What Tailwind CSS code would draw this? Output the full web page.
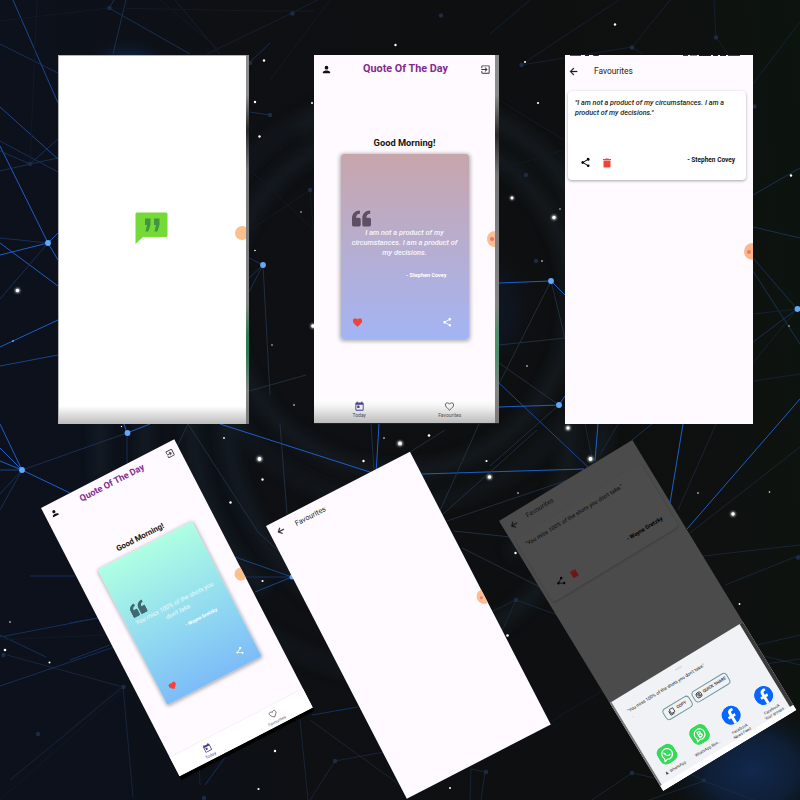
<!DOCTYPE html>
<html lang="en">
<head>
<meta charset="utf-8">
<title>Quote Of The Day</title>
<script src="https://cdn.jsdelivr.net/npm/@tailwindcss/browser@4"></script>
</head>
<body class="bg-[#0d0f12]">
<svg class="absolute" width="0" height="0" aria-hidden="true">
  <defs>
    <symbol id="person" viewBox="0 0 24 24"><path fill="currentColor" d="M12 12a4 4 0 1 0 0-8 4 4 0 0 0 0 8zm0 2c-2.700 0-8 1.300-8 4v2h16v-2c0-2.700-5.300-4-8-4z"/></symbol>
    <symbol id="exit" viewBox="0 0 24 24"><path fill="currentColor" d="M10.100 15.600 11.500 17l5-5-5-5-1.400 1.400 2.600 2.600H3v2h9.700zM19 3H5a2 2 0 0 0-2 2v4h2V5h14v14H5v-4H3v4c0 1.100.9 2 2 2h14a2 2 0 0 0 2-2V5a2 2 0 0 0-2-2z"/></symbol>
    <symbol id="back" viewBox="0 0 24 24"><path fill="currentColor" stroke="currentColor" stroke-width=".6" d="M20 11H7.800l5.600-5.600L12 4l-8 8 8 8 1.400-1.400L7.800 13H20z"/></symbol>
    <symbol id="share" viewBox="0 0 24 24"><path fill="currentColor" d="M18 16.100c-.8 0-1.400.3-2 .8l-7.100-4.200a3.300 3.300 0 0 0 0-1.400L16 7.200A3 3 0 1 0 15 5c0 .2 0 .5.100.7L8 9.800a3 3 0 1 0 0 4.400l7.100 4.200-.1.600a2.900 2.900 0 1 0 3-2.900z"/></symbol>
    <symbol id="heart" viewBox="0 0 24 24"><path fill="currentColor" d="m12 21.400-1.500-1.400C5.400 15.400 2 12.300 2 8.500A5.400 5.400 0 0 1 7.500 3c1.700 0 3.400.8 4.500 2.100A6 6 0 0 1 16.500 3 5.400 5.400 0 0 1 22 8.500c0 3.800-3.400 6.900-8.500 11.500z"/></symbol>
    <symbol id="heart-o" viewBox="0 0 24 24"><path fill="none" stroke="currentColor" stroke-width="2" d="M12 20C6.500 15 3 12 3 8.500A4.500 4.500 0 0 1 7.500 4C9.500 4 11 5 12 7c1-2 2.500-3 4.500-3A4.500 4.500 0 0 1 21 8.500C21 12 17.500 15 12 20z"/></symbol>
    <symbol id="today" viewBox="0 0 24 24"><path fill="currentColor" fill-rule="evenodd" d="M19 3h-1V1h-2v2H8V1H6v2H5a2 2 0 0 0-2 2v14c0 1.100.9 2 2 2h14a2 2 0 0 0 2-2V5a2 2 0 0 0-2-2zm0 16H5V8h14zM7 10h5v5H7z"/></symbol>
    <symbol id="trash" viewBox="0 0 24 24"><path fill="currentColor" d="M5 19c0 1.100.9 2 2 2h10a2 2 0 0 0 2-2V7H5zM20 4h-4.500l-1-1h-5l-1 1H4v2h16z"/></symbol>
    <symbol id="quote" viewBox="0 0 24 20"><path fill="currentColor" d="M10 0v4C7 4 5.200 6 5.200 9H9a2 2 0 0 1 2 2v7a2 2 0 0 1-2 2H2a2 2 0 0 1-2-2v-8C0 4 4 0 10 0zM23 0v4c-3 0-4.800 2-4.800 5H22a2 2 0 0 1 2 2v7a2 2 0 0 1-2 2h-7a2 2 0 0 1-2-2v-8c0-6 4-10 10-10z"/></symbol>
    <symbol id="facebook" viewBox="0 0 24 24"><circle cx="12" cy="12" r="12" fill="#0866ff"/><path fill="#fff" d="M10 24v-8.500H7V12h3V9.700C10 6.300 11.800 4.500 15 4.500c1 0 1.800.1 2.400.2v3.100h-1.700c-1.500 0-2 .8-2 2V12h3.500l-.6 3.500h-2.900V24z"/></symbol>
    <symbol id="whatsapp" viewBox="0 0 24 24"><rect width="24" height="24" rx="9" fill="#37d95a"/><path fill="none" stroke="#fff" stroke-width="1.500" d="m5.200 18.800 1-3.700a6.800 6.800 0 1 1 2.700 2.700z"/><path fill="#fff" d="M9.400 8c-.8.300-1.200 1.300-.8 2.400.8 2.300 2.600 4 4.900 4.800 1.200.4 2.200-.2 2.400-1.200l-1.800-1.100-1 .9a5.500 5.500 0 0 1-2.700-2.600l.8-1z"/></symbol>
    <symbol id="wa-business" viewBox="0 0 24 24"><rect width="24" height="24" rx="9" fill="#37d95a"/><path fill="none" stroke="#fff" stroke-width="1.500" d="m5.200 18.800 1-3.700a6.800 6.800 0 1 1 2.700 2.700z"/><path fill="none" stroke="#fff" stroke-width="1.600" d="M10.300 8.500h2.200a1.600 1.600 0 0 1 0 3.300h-2.200zm0 3.300h2.500a1.800 1.800 0 0 1 0 3.600h-2.500z"/></symbol>
  </defs>
</svg>

<main class="relative w-[800px] h-[800px] overflow-hidden">
  <svg class="absolute inset-0" width="800" height="800" viewBox="0 0 800 800" aria-hidden="true">
    <defs>
      <linearGradient id="sky" x1="0" x2="1" y1="0.1" y2="0"><stop offset="0" stop-color="#0c111c"/><stop offset=".28" stop-color="#0e1014"/><stop offset=".55" stop-color="#0e0f10"/><stop offset=".85" stop-color="#0e1110"/><stop offset="1" stop-color="#0c140f"/></linearGradient>
      <radialGradient id="blue"><stop offset="0" stop-color="#11284e"/><stop offset=".55" stop-color="#0f2342" stop-opacity=".75"/><stop offset="1" stop-color="#0c1626" stop-opacity="0"/></radialGradient>
      <filter id="soft" x="-20%" y="-20%" width="140%" height="140%"><feGaussianBlur stdDeviation="7"/></filter>
      <filter id="glow" x="-1" y="-1" width="3" height="3"><feGaussianBlur stdDeviation="1.200"/></filter>
    </defs>
    <rect width="800" height="800" fill="url(#sky)"/>
    <ellipse cx="128" cy="75" rx="48" ry="38" fill="url(#blue)"/>
    <ellipse cx="752" cy="770" rx="82" ry="64" fill="url(#blue)"/>
    <ellipse cx="490" cy="310" rx="45" ry="60" fill="url(#blue)" opacity=".35"/>
    <g fill="none" stroke="#1c2a35" stroke-width="12" opacity=".5" filter="url(#soft)">
      <circle cx="400" cy="300" r="172"/><circle cx="400" cy="300" r="205" opacity=".7"/>
      <path d="M190 420c5 70 30 130 75 170M225 420c5 80 50 150 110 190M145 420v60M100 420v60M440 650c60-20 120-60 150-150M570 424c5 40-15 90-60 130M605 424c-5 50-30 90-70 130M300 130c60-40 140-40 210 0s90 110 70 210"/>
      <path d="M250 620c60 50 140 70 230 40" opacity=".7"/>
    </g>
    <g fill="none" stroke="#174a9c" stroke-width="1">
      <path stroke="#1b479a" d="M13 0 58 103M0 107l58 52M499 383l91 86"/>
      <path stroke="#1d5fc8" d="M0 146l48 97L0 255M0 243l58 43M58 233l-10 10 10 17M0 347l58-27M0 424l22 46L0 448M0 461l22 9M22 470l48 23M127 433l-3-9M127 433l23-9M220 424l156 50 3-50M422 474l162-5M595 461l3-37M683 424l-13 79M687 529l113-130M499 407l60-2 6-9M499 283l52-2 14 14"/>
      <path stroke="#184585" d="M0 366l58-11M0 470h22M235 557l57 20-37 15"/>
      <path stroke="#162f5c" d="M30 576h45M0 635l46 22M70 660l40-15M0 686l123-42M70 623l28-5M0 637l98-19M245 577h47M312 715l46-8M205 785l45-62M632 440l20-16"/>
      <g opacity=".75">
      <path stroke="#1c3a68" d="M109 8l81 46M126 0l-13 54M109 8l5-8M0 44l58 29M0 141l58 31M30 164l28-25M30 164l28-6M0 171l30-7-30-13M48 243l-48-5M48 243 0 299M22 470l105-37v30M22 470 0 510M22 470 0 494M249 63l21-20M250 112l20 3M249 258l14 7-14 13M263 265l-14 27M753 195l47-27M753 227l47 11M753 271l47 73M753 258l44 51M797 309l-44 33"/>
      <path stroke="#16263d" d="M175 0l45 54M292 13l-85 41M292 13l25-13M490 34l40-34M521 65l98-65M521 65l111-18 38-47M716 37l-2-37M716 37l12 17M753 84l47-62M632 47l10 7M797 309l-44 5M797 309l-44 54M753 381l47-7"/>
      <path stroke="#26384d" d="M551 281 499 384M551 281l14 57-66 7M499 363l60 42-69 61M263 265l7 130M249 391l57-16M280 424l7 90M188 424l-26 54M188 424l70 108 38 35M371 424l3 46M410 452l35-22M438 515l41-91M442 515l95-85M447 521l153-52M454 531l85 9M462 548l100 50"/>
      </g>
      <g opacity=".65"><path stroke="#1d304b" d="M493 611l23-11-18 40M516 600l50 18M7 655l116 32 10 110M123 687 10 780M200 785l-2-60M300 720l8 80M335 761l-25 39M335 761l49-9M310 720l90 65M471 769l14 3-4 28M471 769l-1 31M632 773l-40 27M632 773l32 7M704 781l-55 19M704 781l50 19M704 781l-42-22M740 649l60-14M760 655l40 10M765 664l35-5M716 424l-38 86M585 424l7 33M618 424l-18 31M690 533l110-86M703 556l97-11M725 585l75-30"/></g>
      <path stroke="#131a25" d="M0 21l109-13 155 3h50M30 164l7-164M270 80l60-80M220 50l-60-50M250 170l64 60M310 190l4 50M250 230l60-40M499 100l65 40M499 170l65-20M0 640l123-6M70 730l50-43M0 800l123-110M520 740l100-60"/>
    </g>
    <g fill="#62a8fa"><circle cx="48" cy="243" r="2.900"/><circle cx="263" cy="265" r="2.900"/><circle cx="551" cy="281" r="2.900"/><circle cx="559" cy="405" r="2.900"/><circle cx="22" cy="470" r="2.900"/><circle cx="127.500" cy="433" r="2.900"/><circle cx="797.500" cy="309" r="2.900"/><circle cx="292" cy="577" r="2.500"/></g>
    <g fill="#1d2c46"><circle cx="109.500" cy="8" r="2.200"/><circle cx="30" cy="164" r="2.200"/><circle cx="292.500" cy="13.500" r="2.200"/><circle cx="250" cy="63" r="2.200"/><circle cx="270" cy="115" r="2.200"/><circle cx="310" cy="190" r="2.200"/><circle cx="441" cy="15.500" r="2.200"/><circle cx="521.500" cy="65" r="2.200"/><circle cx="536" cy="261" r="2.200"/><circle cx="526" cy="175" r="2.200"/><circle cx="632" cy="47.500" r="2.200"/><circle cx="716" cy="37.500" r="2.200"/><circle cx="754.500" cy="106.500" r="2.200"/><circle cx="798" cy="557.500" r="2.200"/><circle cx="123.500" cy="687" r="2.200"/><circle cx="3.500" cy="655" r="2.200"/><circle cx="38" cy="734" r="2.200"/><circle cx="335" cy="761" r="2.200"/><circle cx="486" cy="772" r="2.200"/><circle cx="516" cy="600" r="2.200"/><circle cx="632" cy="773" r="2.200"/><circle cx="704" cy="780.500" r="2.200"/><circle cx="204" cy="798" r="2.200"/></g>
    <g fill="#fff" opacity=".7" filter="url(#glow)"><circle cx="17.500" cy="290.500" r="2.500"/><circle cx="259.500" cy="459" r="2.800"/><circle cx="400" cy="443.500" r="2.800"/><circle cx="489.500" cy="477" r="2.600"/><circle cx="590.500" cy="459" r="2.800"/><circle cx="554" cy="217.500" r="2.500"/><circle cx="568" cy="428" r="2.500"/><circle cx="733" cy="514" r="2.500"/><circle cx="313" cy="326" r="2.500"/><circle cx="512" cy="198" r="2"/></g>
    <g fill="#fff"><circle cx="17.500" cy="290.500" r="1.800"/><circle cx="259.500" cy="459" r="1.900"/><circle cx="400" cy="443.500" r="1.900"/><circle cx="489.500" cy="477" r="1.800"/><circle cx="590.500" cy="459" r="1.900"/><circle cx="554" cy="217.500" r="1.700"/><circle cx="568" cy="428" r="1.700"/><circle cx="733" cy="514" r="1.700"/><circle cx="313" cy="326" r="1.800"/><circle cx="512" cy="198" r="1.400"/>
      <circle cx="264" cy="60.500" r="1.200"/><circle cx="255" cy="102" r="1.200"/><circle cx="259.500" cy="136.500" r="1.200"/><circle cx="255" cy="250.500" r=".8"/><circle cx="312" cy="103" r="1"/><circle cx="395.500" cy="45" r="1.200"/><circle cx="525" cy="62" r="1"/><circle cx="538" cy="103" r="1.100"/><circle cx="615" cy="24.500" r="1.200"/><circle cx="791" cy="175.500" r="1.200"/><circle cx="560" cy="209" r=".7"/><circle cx="542" cy="261" r=".8"/><circle cx="301" cy="212" r=".7"/><circle cx="272" cy="345" r=".7"/><circle cx="294" cy="405" r=".8"/><circle cx="527" cy="366" r=".8"/><circle cx="13" cy="341" r=".7"/><circle cx="121.500" cy="426.500" r=".7"/><circle cx="224" cy="438" r=".9"/><circle cx="262.500" cy="479.500" r="1.200"/><circle cx="230.500" cy="502.500" r="1.200"/><circle cx="262.500" cy="581" r="1.100"/><circle cx="363.500" cy="461" r="1.200"/><circle cx="429" cy="435.500" r="1.300"/><circle cx="384" cy="438" r=".8"/><circle cx="486.500" cy="461" r="1.100"/><circle cx="518" cy="493" r=".8"/><circle cx="515.500" cy="553" r="1.200"/><circle cx="507.500" cy="635.500" r="1.300"/><circle cx="5" cy="650" r="1.300"/><circle cx="10" cy="622" r=".8"/><circle cx="49.500" cy="662.500" r="1"/><circle cx="275" cy="751" r="1.200"/><circle cx="258.500" cy="789" r="1.100"/><circle cx="450" cy="788" r="1"/><circle cx="769.500" cy="492" r=".8"/><circle cx="698" cy="493" r=".8"/><circle cx="739.500" cy="604" r=".9"/><circle cx="789" cy="326" r=".7"/></g>
  </svg>

  <!-- Splash screen -->
  <section class="absolute left-[58px] top-[54.500px] w-[191px] h-[369.500px] flex bg-white overflow-hidden">
    <div class="relative flex-1 flex justify-center overflow-hidden pt-[156.500px] border-t border-l border-[#b5b5b5] bg-[linear-gradient(to_bottom,#ffffff_350px,#b8b8b8_369px)]">
      <svg class="-ml-px w-[33px] h-[33px]" viewBox="0 0 33 33"><path fill="#75d936" d="M2 .5h29a1.500 1.500 0 0 1 1.500 1.500v21.500a1.500 1.500 0 0 1-1.500 1.500H8L.5 32V2A1.500 1.500 0 0 1 2 .5z"/><path fill="#42943f" d="M10 6.500h5.500v6.500l-2.300 6.500h-2.700l1.500-6.500h-2zm9 0h5.500v6.500l-2.300 6.500h-2.700l1.500-6.500h-2z"/></svg>
      <span class="absolute right-[-3px] top-[170.500px] size-[14px] rounded-full bg-[#fcc08e]"></span>
    </div>
    <div class="relative w-[3.500px] bg-[linear-gradient(to_bottom,#8b8b8b_0,#8b8b8b_40px,#2a2a2a_75px,#777_115px,#858585_250px,#2f7a50_280px,#2f7a50_300px,#858585_335px,#777_369px)]"></div>
  </section>

  <!-- Quote of the day, upright -->
  <section class="absolute left-[314px] top-[54.500px] w-[185px] h-[369px] flex overflow-hidden border-b border-[#222]">
    <div class="relative flex-1 overflow-hidden bg-[#fefaff] flex flex-col font-[Roboto,sans-serif]">
      <header class="h-[29px] pl-[6.500px] pr-[4.500px] flex items-center justify-between text-[#111]">
        <svg class="size-[11px]"><use href="#person"/></svg>
        <h1 class="text-[10.800px] leading-none font-bold text-[#832a91] whitespace-nowrap">Quote Of The Day</h1>
        <svg class="size-[11px] text-[#333]"><use href="#exit"/></svg>
      </header>
      <h2 class="mt-[52.500px] h-[13px] leading-[13px] text-center text-[9.300px] font-bold text-[#151515]">Good Morning!</h2>
      <article class="mt-[4.500px] mx-auto w-[128px] h-[185px] shrink-0 rounded-[3px] shadow-[0_1px_4px_1px_rgba(0,0,0,0.35)] bg-linear-to-b from-[#c8a5ab] to-[#a3b4f4] flex flex-col text-white">
        <svg class="mt-[56px] ml-[11.500px] w-[19px] h-[17px] text-[#5e4f63]"><use href="#quote"/></svg>
        <p class="mt-[1px] text-center italic text-[7.400px] leading-[10px] font-medium whitespace-nowrap text-white/90">I am not a product of my<br>circumstances. I am a product of<br>my decisions.</p>
        <p class="mt-[12px] pr-[22px] text-right text-[5.500px] leading-[10px] font-bold">- Stephen Covey</p>
        <div class="mt-[37px] px-[11.500px] flex justify-between items-center">
          <svg class="size-[11px] text-[#f44336]"><use href="#heart"/></svg>
          <svg class="size-[10.500px] mr-[5px]"><use href="#share"/></svg>
        </div>
      </article>
      <nav class="mt-auto h-[24px] flex text-center text-[5px] leading-[6px] bg-[linear-gradient(to_bottom,#ffffff_0,#f4f4f4_7px,#bcbcbc_100%)]">
        <div class="flex-1 pt-[2.500px] flex flex-col items-center text-[#4a3f8c]"><svg class="size-[11px]"><use href="#today"/></svg><span class="text-[#4c4a5c]">Today</span></div>
        <div class="flex-1 pt-[2.500px] flex flex-col items-center text-[#555]"><svg class="size-[11px]"><use href="#heart-o"/></svg><span>Favourites</span></div>
      </nav>
      <span class="absolute right-[-8px] top-[176.500px] size-[16px] rounded-full bg-[#fbbd91] flex items-center pl-[3px]"><i class="size-[4px] rounded-full bg-[#ee7065]"></i></span>
    </div>
    <div class="w-[4px] bg-[linear-gradient(to_bottom,#8b8b8b_0,#8b8b8b_40px,#2a2a2a_80px,#777_120px,#858585_250px,#4d8e6c_280px,#4d8e6c_300px,#858585_335px,#777_369px)]"></div>
  </section>

  <!-- Favourites, upright -->
  <section class="absolute left-[565px] top-[54.500px] w-[188px] h-[369px] bg-[#fefaff] overflow-hidden font-[Roboto,sans-serif]">
    <div class="h-[2px] flex justify-between pl-[5px] pr-[13px]"><span class="flex gap-[4px]"><i class="w-[11px] h-px bg-[#555]"></i><i class="w-[4px] h-px bg-[#222]"></i><i class="w-[6px] h-[1.500px] rounded-b bg-[#333]"></i></span><span class="flex gap-[2px]"><i class="w-[5px] h-px bg-[#444]"></i><i class="w-[7px] h-px bg-[#987]"></i><i class="w-[12px] h-px bg-[#222]"></i><i class="w-[5px] h-[1.500px] bg-[#222]"></i><i class="w-[6px] h-[1.500px] bg-[#222]"></i><i class="w-[12px] h-px bg-[#444]"></i></span></div>
    <header class="h-[30px] pl-[3px] flex items-center text-[#1d1b20]">
      <svg class="size-[11px]"><use href="#back"/></svg><h1 class="ml-[15px] text-[8.400px] leading-none">Favourites</h1>
    </header>
    <article class="mt-[4.500px] ml-[3px] w-[178px] h-[89px] rounded-[4px] bg-white shadow-[0_1px_3px_rgba(0,0,0,0.35)] pt-[6.500px] pl-[7px] flex flex-col">
      <p class="text-[7.200px] leading-[10px] italic font-medium text-[#222] whitespace-nowrap">"I am not a product of my circumstances. I am a<br>product of my decisions."</p>
      <div class="mt-[39px] pl-[5px] pr-[11px] flex items-center">
        <svg class="size-[11px] text-black"><use href="#share"/></svg>
        <svg class="size-[12px] ml-[10px] text-[#f04438]"><use href="#trash"/></svg>
        <span class="ml-auto -mt-[5px] text-[6.500px] leading-[10px] font-bold text-[#111]">- Stephen Covey</span>
      </div>
    </article>
    <span class="absolute right-[-8px] top-[188.500px] size-[17px] rounded-full bg-[#fbb68c] flex items-center pl-[3px]"><i class="size-[4px] rounded-full bg-[#ee7860]"></i></span>
  </section>

  <!-- Quote of the day, tilted -->
  <section class="absolute left-[41px] top-[508px] w-[149.500px] h-[306px] origin-top-left -rotate-[27.300deg] bg-black">
    <div class="relative h-[301.500px] bg-[#fefaff] overflow-hidden flex flex-col font-[Roboto,sans-serif]">
      <header class="h-[21px] px-[5px] flex items-center justify-between text-[#111]">
        <svg class="size-[9.500px]"><use href="#person"/></svg>
        <h1 class="text-[9.100px] leading-none font-bold text-[#832a91] whitespace-nowrap">Quote Of The Day</h1>
        <svg class="size-[9.500px] text-[#333]"><use href="#exit"/></svg>
      </header>
      <h2 class="mt-[44.500px] h-[11px] leading-[11px] text-center text-[7.900px] font-bold text-[#151515]">Good Morning!</h2>
      <article class="mt-[4.500px] ml-[22px] w-[106px] h-[151.500px] rounded-[2px] shadow-[0_1px_4px_1px_rgba(0,0,0,0.3)] bg-linear-to-b from-[#aeffe2] to-[#7dbcf8] flex flex-col text-white">
        <svg class="mt-[46px] ml-[10px] w-[16px] h-[14px] text-[#42686f]"><use href="#quote"/></svg>
        <p class="mt-[1px] text-center italic text-[6.300px] leading-[8.500px] whitespace-nowrap text-white/80">You miss 100% of the shots you<br>don't take.</p>
        <p class="mt-[7.500px] pr-[18px] text-right text-[4.800px] leading-[8px] font-bold">- Wayne Gretzky</p>
        <div class="mt-[39.500px] pl-[9px] pr-[13px] flex justify-between items-center">
          <svg class="size-[9px] text-[#f44336]"><use href="#heart"/></svg>
          <svg class="size-[9px]"><use href="#share"/></svg>
        </div>
      </article>
      <nav class="mt-auto h-[22px] flex text-center text-[4.300px] leading-[5px] bg-white border-t border-[#f5f1f5]">
        <div class="flex-1 pt-[4px] flex flex-col items-center text-[#4a3f8c]"><svg class="size-[9.500px]"><use href="#today"/></svg><span class="mt-px">Today</span></div>
        <div class="flex-1 pt-[4px] flex flex-col items-center text-[#666]"><svg class="size-[9.500px]"><use href="#heart-o"/></svg><span class="mt-px">Favourites</span></div>
      </nav>
      <span class="absolute right-[-4px] top-[144px] size-[13px] rounded-full bg-[#fcc08e]"></span>
    </div>
  </section>

  <!-- Empty favourites, tilted -->
  <section class="absolute left-[266px] top-[526px] w-[162px] h-[307px] origin-top-left -rotate-[27.300deg] bg-[#fefaff] overflow-hidden font-[Roboto,sans-serif]">
    <header class="h-[22.500px] pl-[5.500px] flex items-center text-[#1d1b20]">
      <svg class="size-[10px]"><use href="#back"/></svg><h1 class="ml-[11.500px] text-[7.300px] leading-none">Favourites</h1>
    </header>
    <span class="absolute right-[-7px] top-[154.500px] size-[15px] rounded-full bg-[#fbbd91] flex items-center pl-[3px]"><i class="size-[3px] rounded-full bg-[#ee8070]"></i></span>
  </section>

  <!-- Share sheet over favourites, tilted -->
  <section class="absolute left-[499px] top-[521px] w-[155.500px] h-[316px] origin-top-left -rotate-[31.300deg] bg-[#4b4b4b] overflow-hidden flex flex-col font-[Roboto,sans-serif]">
    <header class="h-[21px] pl-[5.500px] flex items-center text-[#151515]">
      <svg class="size-[10px]"><use href="#back"/></svg><h1 class="ml-[10.500px] text-[6.800px] leading-none">Favourites</h1>
    </header>
    <article class="mt-[3px] ml-[4px] w-[147px] h-[74px] rounded-[4px] bg-[#4c4c4c] shadow-[0_1px_2px_rgba(0,0,0,0.18)] pt-[6px] pl-[7px] flex flex-col text-[#161616]">
      <p class="text-[5.900px] leading-[9px] italic font-medium whitespace-nowrap">"You miss 100% of the shots you don't take."</p>
      <div class="mt-[39.500px] pl-[5px] pr-[10px] flex items-center text-black">
        <svg class="size-[10px]"><use href="#share"/></svg>
        <svg class="size-[10px] ml-[6px] text-[#6d1512]"><use href="#trash"/></svg>
        <span class="ml-auto -mt-[4px] text-[5.600px] leading-[10px] font-bold">- Wayne Gretzky</span>
      </div>
    </article>
    <div class="mt-auto h-[103px] bg-[#f1f2f5] border-l-2 border-r-4 border-l-[#777] border-r-[#3a3a3a] flex flex-col text-[#222]">
      <i class="mt-[5px] mx-auto w-[8px] h-[1.500px] rounded bg-[#dcdee1]"></i>
      <p class="mt-[5px] pl-[9px] text-[4.600px] leading-[9px] whitespace-nowrap">"You miss 100% of the shots you don't take."</p>
      <p class="pl-[9px] text-[4px] leading-[4px] text-[#777]">...</p>
      <div class="mt-[8px] ml-[38px] flex gap-[3px] text-[4.200px] font-medium">
        <span class="w-[31px] h-[13px] rounded-[4px] border-[0.700px] border-[#6e989e] flex items-center justify-center gap-[3px]"><svg class="size-[7px]" viewBox="0 0 12 12" fill="none" stroke="currentColor" stroke-width="1.400"><rect x="4" y="1" width="7" height="8" rx="1"/><path d="M2 3v8h7"/></svg>COPY</span>
        <span class="w-[41px] h-[13px] rounded-[4px] border-[0.700px] border-[#6e989e] flex items-center justify-center gap-[2px] whitespace-nowrap"><svg class="size-[7px] shrink-0" viewBox="0 0 12 12" fill="none" stroke="currentColor" stroke-width="1.300"><circle cx="6" cy="6" r="5"/><path d="M2.500 3.500 9.500 8.500M4 7l4 2M5 3l3.500 2"/></svg>QUICK SHARE</span>
      </div>
      <div class="mt-[18px] ml-[2px] w-[150px] grid grid-cols-4 text-center text-[4px] leading-[5px] text-[#333]">
        <div class="flex flex-col items-center gap-[4px]"><svg class="size-[19px]"><use href="#whatsapp"/></svg><span>♟ WhatsApp</span></div>
        <div class="flex flex-col items-center gap-[4px]"><svg class="size-[19px]"><use href="#wa-business"/></svg><span>WhatsApp Bus...</span></div>
        <div class="flex flex-col items-center gap-[4px]"><svg class="size-[19px]"><use href="#facebook"/></svg><span>Facebook<br>News Feed</span></div>
        <div class="flex flex-col items-center gap-[4px]"><svg class="size-[19px]"><use href="#facebook"/></svg><span>Facebook<br>Your groups</span></div>
      </div>
      <div class="mt-auto -ml-[2px] -mr-[4px] h-[6px] shrink-0 bg-[#fefefe]"></div>
    </div>
  </section>
</main>
</body>
</html>
